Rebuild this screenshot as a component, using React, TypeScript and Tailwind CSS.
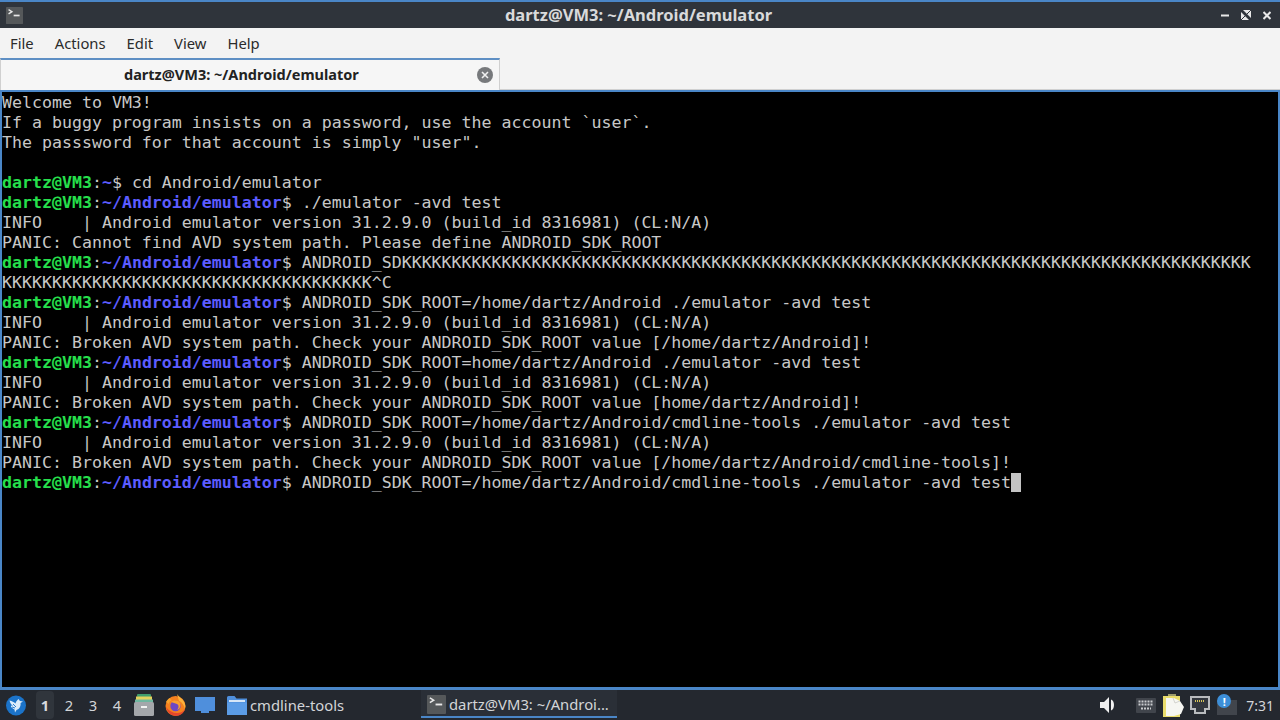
import React from 'react';

const K84 = 'K'.repeat(84);
const K37 = 'K'.repeat(37);

const Prompt: React.FC = () => (
  <>
    <span className="font-bold text-[#26e04c]">dartz@VM3</span>
    <span>:</span>
    <span className="font-bold text-[#5c5cff]">~/Android/emulator</span>
    <span>$ </span>
  </>
);

const lines: React.ReactNode[] = [
  'Welcome to VM3!',
  'If a buggy program insists on a password, use the account `user`.',
  'The passsword for that account is simply "user".',
  '',
  <><span className="font-bold text-[#26e04c]">dartz@VM3</span>:<span className="font-bold text-[#5c5cff]">~</span>$ cd Android/emulator</>,
  <><Prompt />./emulator -avd test</>,
  'INFO    | Android emulator version 31.2.9.0 (build_id 8316981) (CL:N/A)',
  'PANIC: Cannot find AVD system path. Please define ANDROID_SDK_ROOT',
  <><Prompt />ANDROID_SDK{K84}</>,
  `${K37}^C`,
  <><Prompt />ANDROID_SDK_ROOT=/home/dartz/Android ./emulator -avd test</>,
  'INFO    | Android emulator version 31.2.9.0 (build_id 8316981) (CL:N/A)',
  'PANIC: Broken AVD system path. Check your ANDROID_SDK_ROOT value [/home/dartz/Android]!',
  <><Prompt />ANDROID_SDK_ROOT=home/dartz/Android ./emulator -avd test</>,
  'INFO    | Android emulator version 31.2.9.0 (build_id 8316981) (CL:N/A)',
  'PANIC: Broken AVD system path. Check your ANDROID_SDK_ROOT value [home/dartz/Android]!',
  <><Prompt />ANDROID_SDK_ROOT=/home/dartz/Android/cmdline-tools ./emulator -avd test</>,
  'INFO    | Android emulator version 31.2.9.0 (build_id 8316981) (CL:N/A)',
  'PANIC: Broken AVD system path. Check your ANDROID_SDK_ROOT value [/home/dartz/Android/cmdline-tools]!',
  <><Prompt />ANDROID_SDK_ROOT=/home/dartz/Android/cmdline-tools ./emulator -avd test<span className="inline-block h-[19px] w-[10px] bg-[#c4c4c4] align-top" /></>,
];

const TerminalIcon: React.FC<{ size: number }> = ({ size }) => (
  <svg width={size} height={size} viewBox="0 0 20 20">
    <rect width="20" height="20" rx="1" fill="#55585a" />
    <path d="M3 3l4 2.5L3 8" fill="none" stroke="#e8e8e8" strokeWidth="1.6" />
    <path d="M9 10h7" stroke="#e8e8e8" strokeWidth="2" />
  </svg>
);

const PanelIcons = () => (
  <div className="flex items-center">
    <svg width="20" height="21" viewBox="0 0 20 21" className="ml-[6px]">
      <circle cx="10" cy="10.5" r="10" fill="#1b73c9" />
      <path d="M3.5 5.5C6 6 8 7 9.5 8.5 10 6.5 11 5 13 4c0 1 .5 1.5 1 2l3 .5-2.500 1.500c.5 3-1 6-4 7l-1.500 2.500-.5-3C6 13.500 4.500 11.500 5 10.500l2 .5C5 9.500 4 7.500 3.500 5.500z" fill="#dcecfa" />
      <path d="M7 9l3 3M6 12l3 1" stroke="#1b73c9" strokeWidth="0.9" />
    </svg>
    <div className="ml-[10px] flex h-[28px] w-[18px] items-center justify-center rounded-sm bg-[#30353c] font-bold text-[#d8dadd]">1</div>
    <div className="ml-[3px] flex w-[24px] justify-center">2</div>
    <div className="flex w-[24px] justify-center">3</div>
    <div className="flex w-[24px] justify-center">4</div>
    <svg width="20" height="22" viewBox="0 0 20 22" className="ml-[5px]">
      <rect x="3" y="0" width="14" height="3" rx="1" fill="#3f9d6d" />
      <rect x="2" y="2.500" width="16" height="3.500" fill="#e3d25e" />
      <rect x="1" y="5.500" width="18" height="3" fill="#6fb7a0" />
      <rect x="0" y="8" width="20" height="14" rx="1.500" fill="#a4a7ab" />
      <rect x="7" y="12" width="6" height="2" fill="#f2f2f2" />
    </svg>
    <svg width="21" height="22" viewBox="0 0 21 22" className="ml-[11px]">
      <circle cx="10.500" cy="12" r="10" fill="#f4801f" />
      <path d="M12 0c1 2 3 3 5 5 3 3 4 7 3 10-1-4-3-7-6-8z" fill="#fbb13c" />
      <path d="M1 8c1-2 2-3 4-4 0 1 1 2 2 2-2 1-3 2-3 4z" fill="#f7a32e" />
      <circle cx="10.500" cy="12" r="5.200" fill="#6d48c2" />
      <path d="M1 13c1 5 5 9 10 9 4 0 8-3 9-7-2 3-5 4-8 4-4 0-8-2-11-6z" fill="#e5472c" />
      <path d="M6 8c3-2 7-2 9 1 1 3 0 6-3 7 2-2 2-5 0-6-2-1-4-1-6-2z" fill="#f9a02d" />
    </svg>
    <svg width="20" height="16" viewBox="0 0 20 16" className="ml-[9px]">
      <path d="M0 0h20v14h-6v2H6v-2H0z" fill="#4f8fdc" />
    </svg>
    <div className="ml-[12px] flex h-[30px] w-[194px] items-center gap-[3px]">
      <svg width="20" height="19" viewBox="0 0 20 19">
        <path d="M0 1.500A1.500 1.500 0 0 1 1.500 0h6l2 2.500H20V19H0z" fill="#4f8fdc" />
        <rect x="2" y="4" width="16" height="2" fill="#d6e6f7" />
        <rect y="6.500" width="20" height="12.500" fill="#5b9ce6" />
      </svg>
      <span>cmdline-tools</span>
    </div>
    <div className="mb-[2px] flex h-[28px] w-[196px] items-center gap-[3px] bg-[#2a2f37] pl-[6px] shadow-[inset_0_-2px_0_#4a86c7]">
      <TerminalIcon size={19} />
      <span>dartz@VM3: ~/Androi...</span>
    </div>
  </div>
);

const TrayIcons = () => (
  <div className="flex items-center">
    <svg width="17" height="16" viewBox="0 0 17 16">
      <path d="M0 5h4l5-5v16l-5-5H0z" fill="#f0f0f0" />
      <path d="M11 2.500c4 1 4 10 0 11z" fill="#f0f0f0" />
    </svg>
    <svg width="20" height="15" viewBox="0 0 20 15" className="ml-[19px]">
      <rect width="20" height="15" rx="1" fill="#41454c" />
      <path d="M2.500 3.500h15M2.500 6.500h15M5 10.500h10" stroke="#c9cbce" strokeWidth="1.800" strokeDasharray="2 1" />
    </svg>
    <svg width="21" height="23" viewBox="0 0 21 23" className="ml-[7px]">
      <rect x="5" y="0" width="8" height="3" fill="#9c9a6a" />
      <rect y="2" width="17" height="21" fill="#e9dc6c" />
      <path d="M3 4h8l6 3 4 6-3 7-7 2H3z" fill="#f6f6f2" />
      <path d="M10 4l2 5 5-2" fill="none" stroke="#c9c9c4" strokeWidth="0.800" />
    </svg>
    <svg width="20" height="18" viewBox="0 0 20 18" className="ml-[6px]">
      <path d="M1 1h18v12h-4v4H5v-4H1z" fill="#33373e" stroke="#b9bbbe" strokeWidth="2" />
      <path d="M5 5h10" stroke="#d7c65a" strokeWidth="2" strokeDasharray="1 1" />
    </svg>
    <div className="relative ml-[7px] h-[20px] w-[20px]">
      <div className="absolute bottom-0 h-[15px] w-[20px] bg-[#41454c]" />
      <div className="absolute -top-[1px] left-0 flex h-[14px] w-[14px] items-center justify-center rounded-full bg-[#3d8fd9] text-[11px] font-bold leading-none text-white">!</div>
    </div>
    <span className="ml-[9px] mr-[6px] text-[14px]">7:31</span>
  </div>
);

export default function App() {
  return (
    <div className="flex h-[720px] w-[1280px] flex-col overflow-hidden bg-[#f3f3f3] font-['Noto_Sans',sans-serif] text-[14.8px]">
      <div className="h-[2px] bg-[#4a86c7]" />
      <div className="flex h-[26px] items-center bg-[#2f343b] pl-[6px] pr-[9px]">
        <div className="flex flex-1 items-center">
          <TerminalIcon size={17} />
        </div>
        <span className="text-[16.5px] font-bold text-[#d9dadb]">dartz@VM3: ~/Android/emulator</span>
        <div className="flex flex-1 items-center justify-end gap-[12px]">
          <svg width="8" height="9" viewBox="0 0 8 9"><path d="M0 4.500h8" stroke="#e8e8e8" strokeWidth="2" /></svg>
          <svg width="10" height="10" viewBox="0 0 10 10"><path d="M2 0h8v8zM0 2v8h8z" fill="#e8e8e8" /><path d="M0 10L10 0" stroke="#2f343b" strokeWidth="1" /></svg>
          <svg width="8" height="9" viewBox="0 0 8 9"><path d="M.5 1l7 7M7.500 1l-7 7" stroke="#e8e8e8" strokeWidth="2" /></svg>
        </div>
      </div>
      <div className="flex h-[30px] items-center gap-[21px] px-[10px] text-[#2b2b2b]">
        <span>File</span>
        <span>Actions</span>
        <span>Edit</span>
        <span>View</span>
        <span>Help</span>
      </div>
      <div className="flex h-[32px] items-end">
        <div className="flex h-[32px] w-[500px] items-center justify-between border-x border-t-2 border-x-[#d0d0d0] border-t-[#5e8fc4] bg-[#f6f6f6] pl-[123px] pr-[6px]">
          <span className="text-[14.5px] font-bold text-[#222222]">dartz@VM3: ~/Android/emulator</span>
          <svg width="16" height="16" viewBox="0 0 16 16">
            <circle cx="8" cy="8" r="8" fill="#77797c" />
            <path d="M5 5l6 6M11 5l-6 6" stroke="#f0f0f0" strokeWidth="1.600" />
          </svg>
        </div>
        <div className="h-[2px] flex-1 border-b border-[#d0d0d0]" />
      </div>
      <div className="h-[597px] overflow-hidden border-x-2 border-t-2 border-x-[#4a86c7] border-t-[#4a86c7] bg-black pt-px font-['DejaVu_Sans_Mono',monospace] text-[16.6px] leading-[20px] whitespace-pre text-[#c8c8c8]">
        {lines.map((line, i) => (
          <div key={i} className="h-[20px]">{line}</div>
        ))}
      </div>
      <div className="h-[3px] bg-[#4a86c7]" />
      <div className="flex h-[30px] items-center justify-between bg-[#24282f] text-[#d3d5d8]">
        <PanelIcons />
        <TrayIcons />
      </div>
    </div>
  );
}
